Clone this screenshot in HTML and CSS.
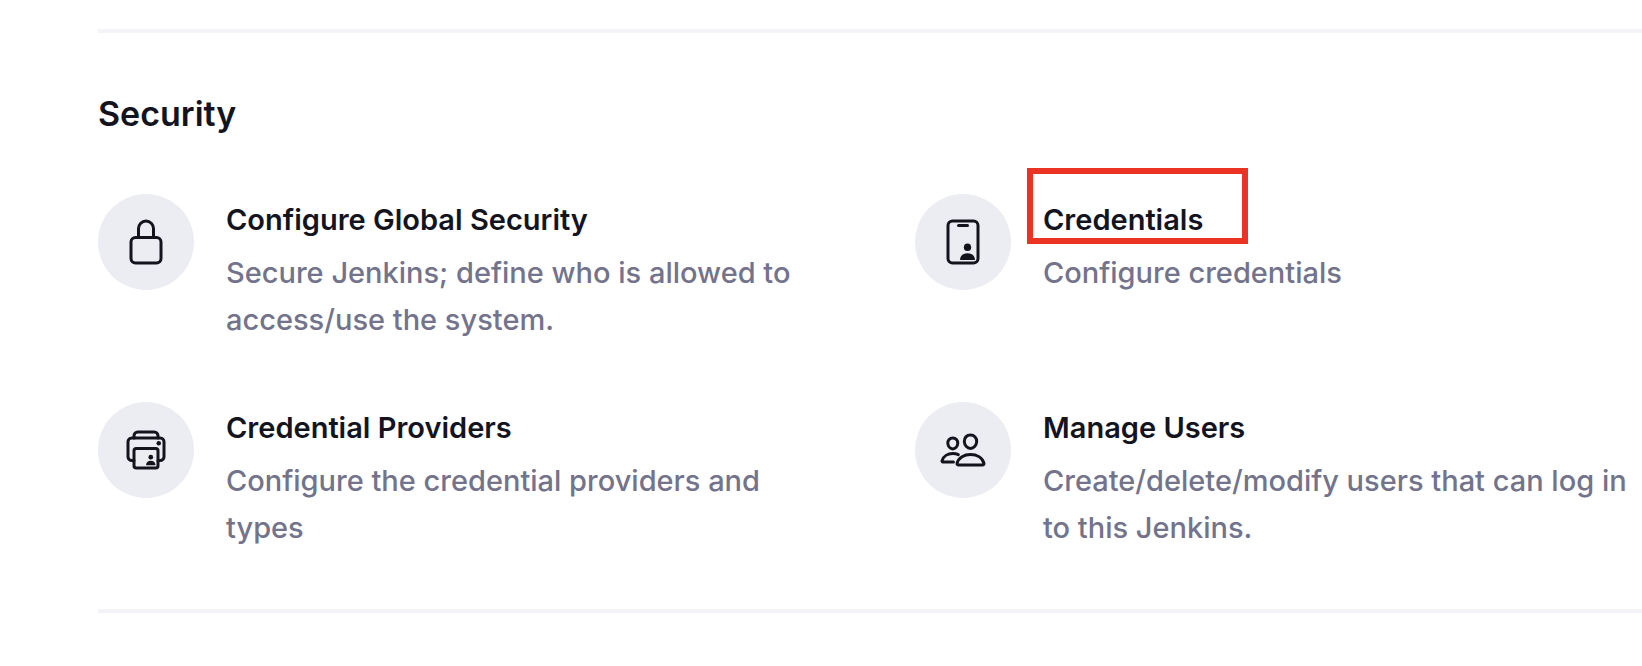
FILE: index.html
```html
<!DOCTYPE html>
<html lang="en">
<head>
<meta charset="utf-8">
<title>Manage Jenkins</title>
<meta name="viewport" content="width=device-width, initial-scale=1">
<link rel="stylesheet" href="styles.css">
</head>
<body>
<main class="page">
  <section class="section">
    <h2 class="section-title">Security</h2>
    <div class="items">
      <a class="item" href="#security">
        <span class="item-icon">
          <svg class="icon" viewBox="0 0 512 512" aria-hidden="true">
            <path d="M336 208v-95a80 80 0 0 0-160 0v95"/>
            <rect x="96" y="208" width="320" height="272" rx="48"/>
          </svg>
        </span>
        <span class="item-text">
          <span class="item-title">Configure Global Security</span>
          <span class="item-description">Secure Jenkins; define who is allowed to access/use the system.</span>
        </span>
      </a>
      <a class="item" href="#credentials">
        <span class="item-icon">
          <svg class="icon" viewBox="0 0 512 512" aria-hidden="true">
            <rect x="96" y="32" width="320" height="448" rx="48"/>
            <path d="M208 80h96"/>
            <g class="solid">
              <ellipse cx="304" cy="312" rx="39" ry="41"/>
              <path d="M304 376c-46 0-74 26-80 61-1 6 2 11 8 11h144c6 0 9-5 8-11-6-35-34-61-80-61z"/>
            </g>
          </svg>
        </span>
        <span class="item-text">
          <span class="item-title highlighted">Credentials</span>
          <span class="item-description">Configure credentials</span>
        </span>
      </a>
      <a class="item" href="#providers">
        <span class="item-icon">
          <svg class="icon" viewBox="0 0 512 512" aria-hidden="true">
            <path d="M384 368h24a40 40 0 0 0 40-40V168a40 40 0 0 0-40-40H104a40 40 0 0 0-40 40v160a40 40 0 0 0 40 40h24"/>
            <rect x="128" y="240" width="256" height="208" rx="24"/>
            <path d="M384 128v-24a40 40 0 0 0-40-40H168a40 40 0 0 0-40 40v24"/>
            <g class="solid">
              <circle cx="392" cy="184" r="24"/>
              <circle cx="307" cy="332" r="25"/>
              <path d="M307 371c-29 0-46 16-50 39-1 5 1 8 5 8h90c4 0 6-3 5-8-4-23-21-39-50-39z"/>
            </g>
          </svg>
        </span>
        <span class="item-text">
          <span class="item-title">Credential Providers</span>
          <span class="item-description">Configure the credential providers and types</span>
        </span>
      </a>
      <a class="item" href="#users">
        <span class="item-icon">
          <svg class="icon" viewBox="0 0 512 512" aria-hidden="true">
            <path d="M402 168c-2.93 40.67-33.1 72-66 72s-63.12-31.32-66-72c-3-42.31 26.37-72 66-72s69 30.46 66 72z"/>
            <path d="M336 304c-65.17 0-127.84 32.37-143.54 95.41-2.08 8.34 3.15 16.59 11.72 16.59h263.65c8.57 0 13.77-8.25 11.72-16.59C463.85 335.36 401.18 304 336 304z"/>
            <path d="M200 185.94c-2.34 32.48-26.72 58.06-53 58.06s-50.7-25.57-53-58.06C91.61 152.15 115.34 128 147 128s55.39 24.77 53 57.94z"/>
            <path d="M206 306c-18.05-8.27-37.93-11.45-59-11.45-52 0-102.1 25.85-114.65 76.2-1.65 6.66 2.53 13.25 9.37 13.25H154"/>
          </svg>
        </span>
        <span class="item-text">
          <span class="item-title">Manage Users</span>
          <span class="item-description">Create/delete/modify users that can log in to this Jenkins.</span>
        </span>
      </a>
    </div>
  </section>
</main>
</body>
</html>
```
FILE: styles.css
```css
*,
*::after {
  box-sizing: border-box;
}

body {
  margin: 0;
  background: #fff;
  color: #14141f;
  font-family: Inter, "Liberation Sans", sans-serif;
  font-size: 29px;
}

.page {
  padding: 29px 0 53px 98px;
}

.section {
  padding: 61px 0 58px;
  border-top: 4px solid #f3f3f8;
  border-bottom: 4px solid #f3f3f8;
}

.section-title {
  margin: 0 0 60px;
  font-size: 34px;
  font-weight: 600;
  line-height: 40px;
}

.items {
  display: grid;
  grid-template-columns: 1fr 1fr;
  gap: 59px 90px;
}

.item {
  display: flex;
  align-items: flex-start;
  gap: 32px;
  color: inherit;
  text-decoration: none;
}

.item-icon {
  display: flex;
  flex: none;
  align-items: center;
  justify-content: center;
  width: 96px;
  height: 96px;
  border-radius: 50%;
  background: #ecedf3;
}

.icon {
  width: 48px;
  height: 48px;
  fill: none;
  stroke: currentColor;
  stroke-width: 32;
  stroke-linecap: round;
  stroke-linejoin: round;
}

.solid {
  fill: currentColor;
  stroke: none;
}

.item-text {
  display: flex;
  flex: 1;
  flex-direction: column;
  align-items: flex-start;
  gap: 13px;
  min-width: 0;
  padding-top: 10px;
}

.item-title {
  font-weight: 600;
  line-height: 32px;
}

.item-description {
  color: #73738c;
  font-weight: 500;
  line-height: 47px;
}

.highlighted {
  position: relative;
}

.highlighted::after {
  content: "";
  position: absolute;
  top: -36px;
  left: -16px;
  width: 221px;
  height: 76px;
  border: 6px solid #eb3323;
}
```
